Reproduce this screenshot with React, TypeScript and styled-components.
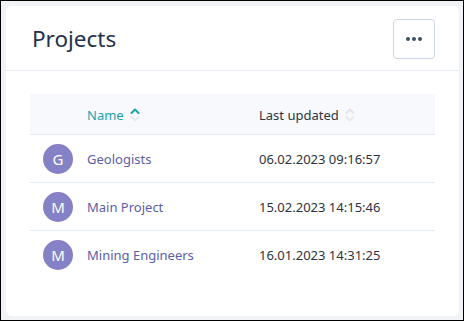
import styled, { createGlobalStyle } from 'styled-components';

const GlobalStyle = createGlobalStyle`
  html, body {
    margin: 0;
    padding: 0;
  }
  body {
    font-family: "Noto Sans", "Open Sans", sans-serif;
    background: #000;
  }
`;

type Project = {
  name: string;
  updated: string;
};

const projects: Project[] = [
  { name: 'Geologists', updated: '06.02.2023 09:16:57' },
  { name: 'Main Project', updated: '15.02.2023 14:15:46' },
  { name: 'Mining Engineers', updated: '16.01.2023 14:31:25' },
];

const Frame = styled.div`
  box-sizing: border-box;
  width: 464px;
  height: 321px;
  border: 1px solid #000;
  background: #f1f3f6;
  padding: 5px 4px 4px 5px;
  display: flex;
`;

const Card = styled.section`
  flex: 1;
  background: #fff;
  border-radius: 6px;
  display: flex;
  flex-direction: column;
`;

const CardHeader = styled.header`
  height: 65px;
  box-sizing: border-box;
  border-bottom: 1px solid #e8edf3;
  display: flex;
  align-items: center;
  justify-content: space-between;
  padding: 0 24px 0 26px;
`;

const Title = styled.h1`
  margin: 0;
  font-size: 22.5px;
  font-weight: 400;
  color: #25324a;
`;

const MoreButton = styled.button`
  width: 42px;
  height: 40px;
  box-sizing: border-box;
  border: 1px solid #c9d6e6;
  border-radius: 4px;
  background: #fff;
  display: flex;
  align-items: center;
  justify-content: center;
  gap: 2px;
  padding: 0;
  margin-top: 1px;
  cursor: pointer;
`;

const Dot = styled.span`
  width: 4px;
  height: 4px;
  border-radius: 50%;
  background: #3f5068;
`;

const CardBody = styled.div`
  padding: 23px 24px 0 24px;
`;

const Row = styled.div<{ $head?: boolean }>`
  display: grid;
  grid-template-columns: 57px 172px 1fr;
  align-items: center;
  height: ${(p) => (p.$head ? '41px' : '48px')};
  box-sizing: border-box;
  background: ${(p) => (p.$head ? '#f7f9fc' : '#fff')};
  border-bottom: 1px solid #e4ebf3;
  font-size: 13px;

  &:last-child {
    border-bottom: none;
  }
`;

const HeadCell = styled.div<{ $active?: boolean }>`
  display: flex;
  align-items: center;
  gap: 6px;
  color: ${(p) => (p.$active ? '#1ba3ac' : '#2c3444')};
  padding-top: 2px;
`;

const AvatarCell = styled.div`
  padding-left: 13px;
  display: flex;
`;

const Avatar = styled.div`
  width: 30px;
  height: 30px;
  border-radius: 50%;
  background: #8581c6;
  color: #fff;
  display: flex;
  align-items: center;
  justify-content: center;
  font-size: 15px;
`;

const NameCell = styled.div`
  color: #5c5ea5;
`;

const DateCell = styled.div`
  color: #2d3340;
`;

const SortIcon = ({ dir }: { dir?: 'asc' | 'desc' }) => {
  const up = dir === 'asc' ? '#1ba3ac' : '#dfe4ea';
  const down = dir === 'desc' ? '#1ba3ac' : '#e6eaef';
  return (
    <svg width="10" height="16" viewBox="0 0 10 16" fill="none">
      <path d="M1.5 6 L5 2.5 L8.5 6" stroke={up} strokeWidth="2" strokeLinecap="round" strokeLinejoin="round" />
      <path d="M1.5 10 L5 13.5 L8.5 10" stroke={down} strokeWidth="2" strokeLinecap="round" strokeLinejoin="round" />
    </svg>
  );
};

export default function App() {
  return (
    <>
      <GlobalStyle />
      <Frame>
        <Card>
          <CardHeader>
            <Title>Projects</Title>
            <MoreButton aria-label="More">
              <Dot />
              <Dot />
              <Dot />
            </MoreButton>
          </CardHeader>
          <CardBody>
            <div>
              <Row $head>
                <div />
                <HeadCell $active>
                  Name <SortIcon dir="asc" />
                </HeadCell>
                <HeadCell>
                  Last updated <SortIcon />
                </HeadCell>
              </Row>
              {projects.map((p) => (
                <Row key={p.name}>
                  <AvatarCell>
                    <Avatar>{p.name[0]}</Avatar>
                  </AvatarCell>
                  <NameCell>{p.name}</NameCell>
                  <DateCell>{p.updated}</DateCell>
                </Row>
              ))}
            </div>
          </CardBody>
        </Card>
      </Frame>
    </>
  );
}
